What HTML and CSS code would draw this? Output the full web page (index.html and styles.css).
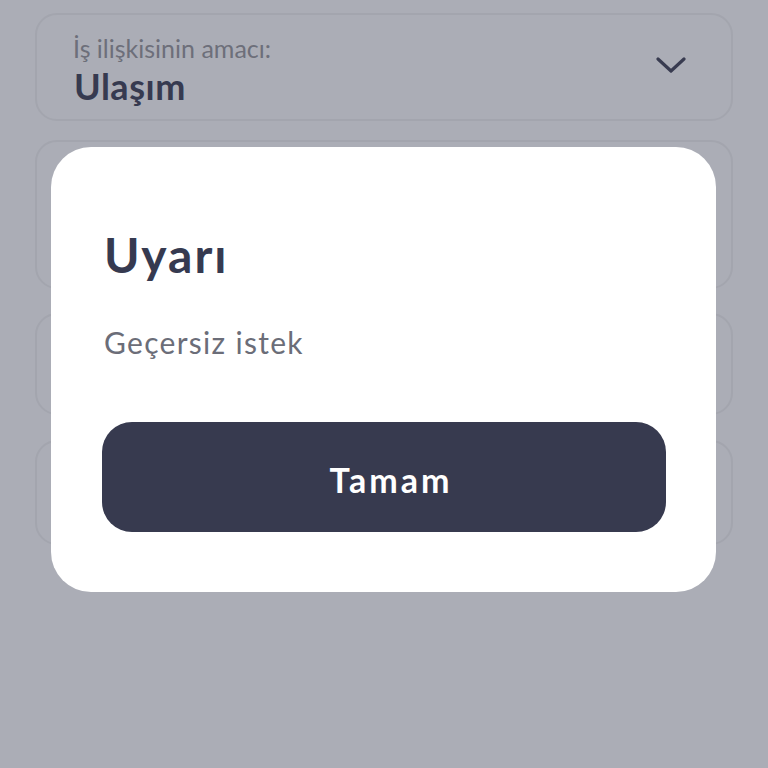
FILE: index.html
```html
<!DOCTYPE html>
<html lang="tr">
<head>
<meta charset="utf-8">
<title>Uyarı</title>
<link rel="stylesheet" href="styles.css">
</head>
<body>
<div class="form">
  <div class="field field-select">
    <div class="field-text">
      <div class="field-label">İş ilişkisinin amacı:</div>
      <div class="field-value">Ulaşım</div>
    </div>
    <svg class="chevron" width="30" height="17" viewBox="0 0 30 17"><path d="M2 2 L15 14 L28 2" fill="none" stroke="#383b50" stroke-width="3.2" stroke-linecap="round" stroke-linejoin="round"/></svg>
  </div>
  <div class="field field-2"></div>
  <div class="field field-3"></div>
  <div class="field field-4"></div>
</div>
<div class="modal">
  <h1 class="modal-title">Uyarı</h1>
  <p class="modal-text">Geçersiz istek</p>
  <button class="modal-button">Tamam</button>
</div>
</body>
</html>
```
FILE: styles.css
```css
html, body {
  margin: 0;
  padding: 0;
}
body {
  width: 768px;
  height: 768px;
  background: #abadb6;
  font-family: "Lato", "Liberation Sans", sans-serif;
  position: relative;
  overflow: hidden;
}
.form {
  display: flex;
  flex-direction: column;
  padding: 13px 35px 0 35px;
}
.field {
  box-sizing: border-box;
  border: 2px solid #a3a5ae;
  border-radius: 22px;
}
.field-select {
  height: 108px;
  display: flex;
  align-items: flex-start;
  justify-content: space-between;
  padding: 18px 45px 0 36px;
}
.field-text {
  display: flex;
  flex-direction: column;
}
.field-label {
  font-size: 25px;
  line-height: 30px;
  color: #6d6f7a;
}
.field-value {
  margin: 2px 0 0 1px;
  font-size: 36px;
  line-height: 43px;
  font-weight: 700;
  color: #363a50;
  letter-spacing: 0.5px;
}
.chevron {
  display: block;
  margin-top: 24px;
}
.field-2 {
  margin-top: 19px;
  height: 149px;
}
.field-3 {
  margin-top: 24px;
  height: 102px;
}
.field-4 {
  margin-top: 25px;
  height: 105px;
}
.modal {
  position: absolute;
  left: 51px;
  top: 147px;
  width: 665px;
  height: 445px;
  box-sizing: border-box;
  background: #ffffff;
  border-radius: 40px;
  padding: 79px 50px 0 53px;
  display: flex;
  flex-direction: column;
}
.modal-title {
  margin: 0;
  font-size: 48px;
  line-height: 58px;
  font-weight: 700;
  letter-spacing: 2px;
  color: #363a50;
}
.modal-text {
  margin: 40px 0 0 0;
  font-size: 30px;
  line-height: 36px;
  font-weight: 400;
  letter-spacing: 1.3px;
  color: #6b6d78;
}
.modal-button {
  margin: 62px 0 0 -2px;
  height: 110px;
  padding: 4px 0 0 14px;
  border: none;
  border-radius: 30px;
  background: #373a4f;
  color: #ffffff;
  font-family: "Lato", "Liberation Sans", sans-serif;
  font-size: 34px;
  font-weight: 700;
  letter-spacing: 3px;
  cursor: pointer;
}
```
